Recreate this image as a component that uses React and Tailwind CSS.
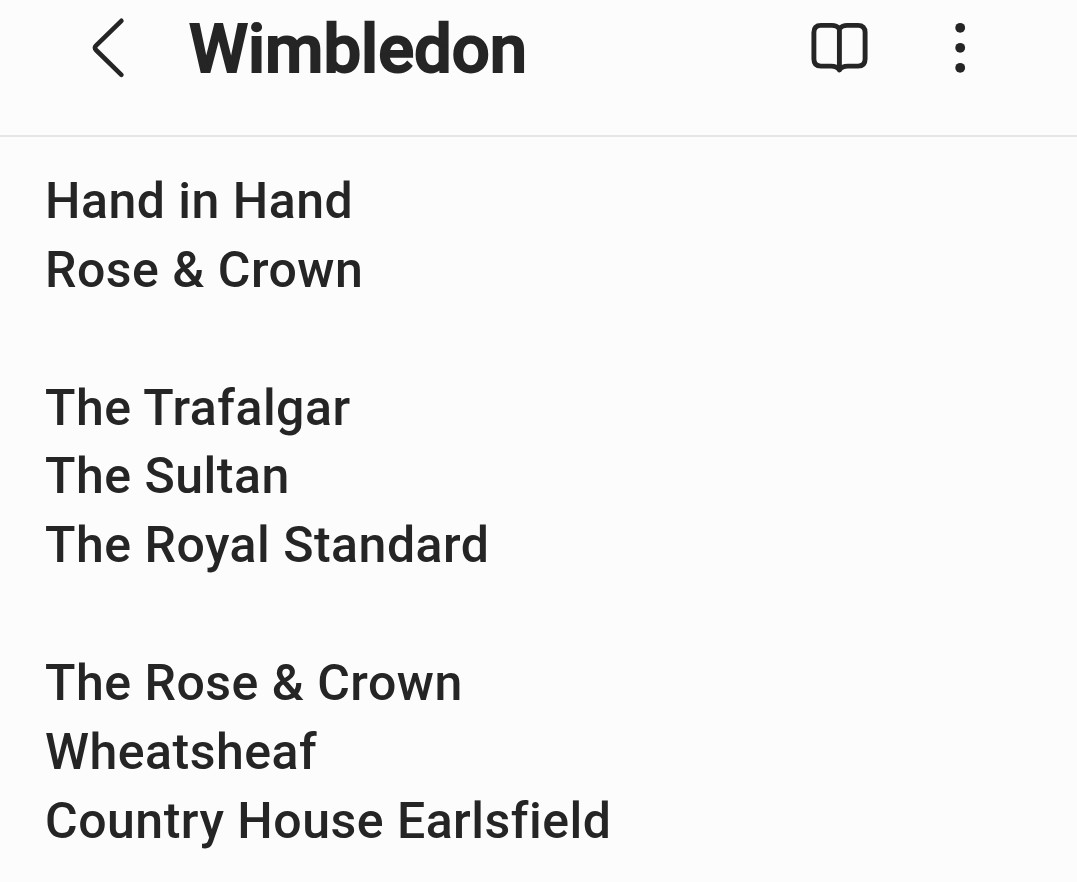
import React from 'react';

const groups = [
  ['Hand in Hand', 'Rose & Crown'],
  ['The Trafalgar', 'The Sultan', 'The Royal Standard'],
  ['The Rose & Crown', 'Wheatsheaf', 'Country House Earlsfield'],
];

const App = () => {
  return (
    <div className="h-[882px] w-[1077px] overflow-hidden bg-[#fcfcfc] font-['Roboto',sans-serif] text-[#252525]">
      {/* Header */}
      <header className="flex h-[137px] items-start border-b-2 border-[#e6e6e6] pl-[88px]">
        <button type="button" aria-label="Back" className="mt-[16px] h-[64px] w-[40px]">
          <svg viewBox="0 0 40 64" className="h-[64px] w-[40px]" fill="none" stroke="currentColor" strokeWidth="4.6" strokeLinecap="round" strokeLinejoin="round">
            <path d="M33.4 4.8 L8 29.6 Q5.8 31.8 8 34 L33.4 58.8" />
          </svg>
        </button>
        <h1 className="ml-[61px] w-[617px] text-[67px] leading-[98px] font-medium whitespace-nowrap [-webkit-text-stroke:2px_#252525]">Wimbledon</h1>
        <button type="button" aria-label="Reading mode" className="mt-[20px] h-[56px] w-[64px]">
          <svg viewBox="0 0 64 56" className="h-[56px] w-[64px]" fill="none" stroke="currentColor" strokeWidth="4.9" strokeLinecap="round" strokeLinejoin="round">
            <path d="M33.4 8.5 Q30.5 5.4 26 5.4 H15 Q7.9 5.4 7.9 12.5 V39 Q7.9 46.1 15 46.1 H25 Q31 46.1 33.4 50 Q35.8 46.1 42 46.1 H52 Q59.1 46.1 59.1 39 V12.5 Q59.1 5.4 52 5.4 H41 Q36.5 5.4 33.4 8.5 V50" />
          </svg>
        </button>
        <button type="button" aria-label="More options" className="mt-[18px] ml-[80px] h-[60px] w-[20px]">
          <svg viewBox="0 0 20 60" className="h-[60px] w-[20px]" fill="currentColor">
            <circle cx="10.2" cy="9.8" r="4.9" />
            <circle cx="10.2" cy="29.8" r="4.9" />
            <circle cx="10.2" cy="49.8" r="4.9" />
          </svg>
        </button>
      </header>

      {/* Note body */}
      <main className="flex flex-col gap-[68.85px] pt-[30px] pl-[45px] text-[50px] leading-[68.85px] font-medium tracking-[0.5px]">
        {groups.map((lines) => (
          <div key={lines[0]}>
            {lines.map((line) => (
              <p key={line} className="whitespace-nowrap">{line}</p>
            ))}
          </div>
        ))}
      </main>
    </div>
  );
};

export default App;
